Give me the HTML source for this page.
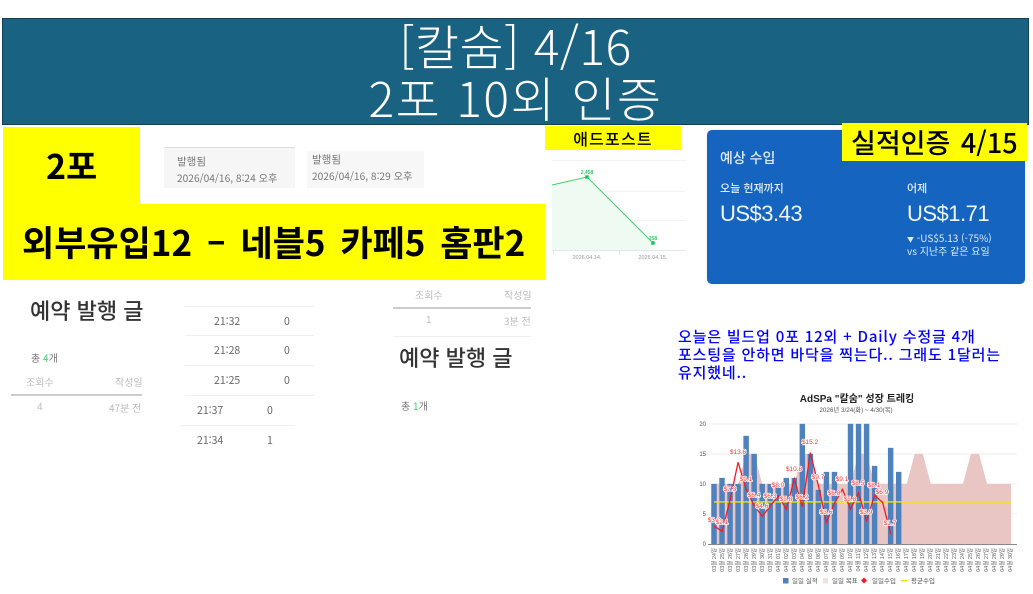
<!DOCTYPE html>
<html lang="ko"><head><meta charset="utf-8"><title>칼숨</title>
<style>
html,body{margin:0;padding:0;background:#fff;}
body{width:1033px;height:594px;overflow:hidden;position:relative;font-family:"Liberation Sans","Noto Sans CJK KR",sans-serif;}
#w{position:absolute;left:0;top:0;width:1033px;height:594px;filter:blur(.3px);}
.a{position:absolute;white-space:nowrap;line-height:20px;height:20px;}
.b{position:absolute;}
.k{font-family:"Noto Sans CJK KR","Liberation Sans",sans-serif;}
.g{color:#777;font-size:10px;}
.l{color:#bbb;font-size:10px;}
.n{color:#666;font-size:10.5px;font-family:"Noto Sans CJK KR",sans-serif;}
.h{color:#333;font-size:22px;font-weight:500;font-family:"Noto Sans CJK KR",sans-serif;}
.ln{position:absolute;height:1px;background:#f0f0f0;}
.t{color:#00f;font-size:15px;font-weight:500;letter-spacing:.82px;}
svg text{font-family:"Liberation Sans","Noto Sans CJK KR",sans-serif;}
</style></head>
<body><div id="w">
<div class="b" style="left:2px;top:18px;width:1025px;height:105px;background:#1a6282;border:1px solid #123f55;"></div>
<div class="a k" style="left:2px;width:1027px;top:19px;height:50px;line-height:50px;text-align:center;color:#fff;font-size:48px;font-weight:300;letter-spacing:.5px;">[칼숨] 4/16</div>
<div class="a k" style="left:2px;width:1027px;top:71px;height:50px;line-height:50px;text-align:center;color:#fff;font-size:48px;font-weight:300;letter-spacing:1.5px;">2포 10외 인증</div>

<div class="b" style="left:3px;top:127px;width:137px;height:78px;background:#ff0;"></div>
<div class="b" style="left:3px;top:204px;width:542px;height:76px;background:#ff0;"></div>
<div class="a k" style="left:46px;top:145px;height:40px;line-height:40px;font-size:34px;font-weight:700;color:#000;">2포</div>
<div class="a k" style="left:22px;top:221px;height:42px;line-height:42px;font-size:35px;font-weight:700;color:#000;word-spacing:5px;">외부유입12 – 네블5 카페5 홈판2</div>

<div class="b" style="left:164px;top:147px;width:131px;height:40px;background:#f6f6f6;border-top:1px solid #ddd;"></div>
<div class="b" style="left:307px;top:151px;width:117px;height:37px;background:#f7f7f7;"></div>
<div class="a k g" style="left:177px;top:152px;font-size:10.5px;">발행됨</div>
<div class="a k g" style="left:177px;top:168px;font-size:10.2px;">2026/04/16, 8:24 오후</div>
<div class="a k g" style="left:312px;top:150px;font-size:10.5px;">발행됨</div>
<div class="a k g" style="left:312px;top:166px;font-size:10.2px;">2026/04/16, 8:29 오후</div>

<div class="a h" style="left:30px;top:300px;">예약 발행 글</div>
<div class="a k g" style="left:31px;top:348px;">총 <span style="color:#3ecf6b">4</span>개</div>
<div class="a k l" style="left:26px;top:372px;">조회수</div>
<div class="a k l" style="left:115px;top:372px;">작성일</div>
<div class="ln" style="left:11px;top:394px;width:131px;height:1.5px;background:#ccc;"></div>
<div class="a l" style="left:37px;top:398px;">4</div>
<div class="a k l" style="left:109px;top:398px;">47분 전</div>

<div class="ln" style="left:185px;top:306px;width:129px;"></div>
<div class="a n" style="left:214px;top:312px;">21:32</div><div class="a n" style="left:284px;top:312px;">0</div>
<div class="ln" style="left:185px;top:335px;width:129px;"></div>
<div class="a n" style="left:214px;top:341px;">21:28</div><div class="a n" style="left:284px;top:341px;">0</div>
<div class="ln" style="left:185px;top:365px;width:129px;"></div>
<div class="a n" style="left:214px;top:371px;">21:25</div><div class="a n" style="left:284px;top:371px;">0</div>
<div class="ln" style="left:185px;top:395px;width:129px;"></div>
<div class="a n" style="left:197px;top:401px;">21:37</div><div class="a n" style="left:267px;top:401px;">0</div>
<div class="ln" style="left:180px;top:425px;width:115px;"></div>
<div class="a n" style="left:197px;top:431px;">21:34</div><div class="a n" style="left:267px;top:431px;">1</div>

<div class="a k l" style="left:415px;top:285px;">조회수</div>
<div class="a k l" style="left:504px;top:285px;">작성일</div>
<div class="ln" style="left:393px;top:307px;width:138px;height:1.5px;background:#ccc;"></div>
<div class="a l" style="left:426px;top:311px;">1</div>
<div class="a k l" style="left:504px;top:311px;">3분 전</div>
<div class="ln" style="left:393px;top:336px;width:138px;"></div>
<div class="a h" style="left:399px;top:347px;">예약 발행 글</div>
<div class="a k g" style="left:401px;top:396px;">총 <span style="color:#3ecf6b">1</span>개</div>

<div class="b" style="left:545px;top:126px;width:136px;height:24px;background:#ff0;"></div>
<div class="a k" style="left:545px;width:136px;top:128px;text-align:center;font-size:16px;font-weight:500;letter-spacing:1.2px;color:#000;">애드포스트</div>
<svg class="b" style="left:545px;top:150px;" width="145" height="115" viewBox="545 150 145 115">
<line x1="552" x2="686" y1="160.5" y2="160.5" stroke="#f2f2f2"/>
<line x1="552" x2="686" y1="191.5" y2="191.5" stroke="#f4f4f4"/>
<line x1="552" x2="686" y1="220.5" y2="220.5" stroke="#f4f4f4"/>
<polygon points="552,185 587,177 653,243 653,251 552,251" fill="#effaf2"/>
<polyline points="552,185 587,177 653,243" fill="none" stroke="#3fd06a" stroke-width="1"/>
<rect x="585.3" y="175.3" width="3.4" height="3.4" fill="#06c755"/>
<rect x="651.3" y="241.3" width="3.4" height="3.4" fill="#06c755"/>
<line x1="552" x2="686" y1="250.5" y2="250.5" stroke="#dfe8f4"/>
<line x1="553.5" x2="553.5" y1="251" y2="255" stroke="#dfe8f4"/>
<line x1="619.5" x2="619.5" y1="251" y2="255" stroke="#dfe8f4"/>
<text x="587" y="174" font-size="5" font-weight="700" fill="#35c766" text-anchor="middle">2,458</text>
<text x="653" y="240" font-size="5" font-weight="700" fill="#35c766" text-anchor="middle">258</text>
<text x="587" y="259" font-size="5.5" fill="#999" text-anchor="middle">2026.04.14.</text>
<text x="653" y="259" font-size="5.5" fill="#999" text-anchor="middle">2026.04.15.</text>
</svg>

<div class="b" style="left:707px;top:130px;width:318px;height:154px;background:#1565c0;border-radius:5px;box-shadow:0 0 1px #9db;"></div>
<div class="b" style="left:842px;top:123px;width:185px;height:38px;background:#ff0;"></div>
<div class="a k" style="left:851px;top:122px;height:40px;line-height:40px;font-size:27px;font-weight:500;color:#000;word-spacing:3px;">실적인증 4/15</div>
<div class="a k" style="left:720px;top:148px;font-size:14px;font-weight:500;color:#dde9f7;">예상 수입</div>
<div class="a k" style="left:720px;top:178px;font-size:11px;font-weight:500;color:#e3edf9;">오늘 현재까지</div>
<div class="a" style="left:720px;top:204px;font-size:22px;letter-spacing:-.5px;color:#f0f5fc;">US$3.43</div>
<div class="a k" style="left:907px;top:178px;font-size:11px;font-weight:500;color:#e3edf9;">어제</div>
<div class="a" style="left:907px;top:204px;font-size:22px;letter-spacing:-.5px;color:#f0f5fc;">US$1.71</div>
<div class="a k" style="left:907px;top:228px;font-size:10px;color:#dfeaf8;"><span style="font-size:7px;">▼</span> -US$5.13 (-75%)</div>
<div class="a k" style="left:907px;top:241px;font-size:10px;color:#dfeaf8;">vs 지난주 같은 요일</div>

<div class="a k t" style="left:678px;top:327px;">오늘은 빌드업 0포 12외 + Daily 수정글 4개</div>
<div class="a k t" style="left:678px;top:345px;">포스팅을 안하면 바닥을 찍는다.. 그래도 1달러는</div>
<div class="a k t" style="left:678px;top:363px;">유지했네..</div>

<svg class="b" style="left:680px;top:385px;" width="353" height="205" viewBox="680 385 353 205">
<text x="857" y="402" font-size="10" font-weight="700" fill="#222" text-anchor="middle">AdSPa "칼숨" 성장 트레킹</text>
<text x="856" y="412" font-size="6.3" fill="#555" text-anchor="middle">2026년 3/24(화) ~ 4/30(목)</text>
<g stroke="#eee" stroke-width="1">
<line x1="708" x2="1017" y1="424" y2="424"/><line x1="708" x2="1017" y1="454" y2="454"/><line x1="708" x2="1017" y1="484" y2="484"/><line x1="708" x2="1017" y1="514" y2="514"/>
</g>
<g font-size="6" fill="#555" text-anchor="end">
<text x="706" y="426">20</text><text x="706" y="456">15</text><text x="706" y="486">10</text><text x="706" y="516">5</text><text x="706" y="546">0</text>
</g>
<g transform="translate(714,544) scale(8.03,-6.01)">
<polygon fill="#e9c6c4" points="0,0 0,10 3,10 4,15 5,15 6,10 10,10 11,15 12,15 13,10 17,10 18,15 19,15 20,10 24,10 25,15 26,15 27,10 31,10 32,15 33,15 34,10 37,10 37,0"/>
<g fill="#4f81bd">
<rect x="-.34" width=".68" height="10"/><rect x=".66" width=".68" height="11"/><rect x="1.66" width=".68" height="10"/><rect x="2.66" width=".68" height="10"/><rect x="3.66" width=".68" height="18"/><rect x="4.66" width=".68" height="15"/><rect x="5.66" width=".68" height="10"/><rect x="6.66" width=".68" height="10"/><rect x="7.66" width=".68" height="9.5"/><rect x="8.66" width=".68" height="11"/><rect x="9.66" width=".68" height="11"/><rect x="10.66" width=".68" height="20"/><rect x="11.66" width=".68" height="15"/><rect x="12.66" width=".68" height="9"/><rect x="13.66" width=".68" height="12"/><rect x="14.66" width=".68" height="12"/><rect x="16.66" width=".68" height="20"/><rect x="17.66" width=".68" height="20"/><rect x="18.66" width=".68" height="20"/><rect x="19.66" width=".68" height="13"/><rect x="21.66" width=".68" height="16"/><rect x="22.66" width=".68" height="12"/>
</g>
<line x1="0" x2="37" y1="7" y2="7" stroke="#f2e500" stroke-width="1.3" vector-effect="non-scaling-stroke"/>
<polyline fill="none" stroke="#f01c22" stroke-width="1.3" vector-effect="non-scaling-stroke" points="0,3 1,2.1 2,7.3 3,13.6 4,9.1 5,6.4 6,4.6 7,6.3 8,8 9,5.8 10,10.8 11,6.2 12,15.2 13,9.7 14,3.6 15,6.8 16,9.1 17,5.8 18,8.5 19,3.9 20,8.1 21,6.9 22,1.7"/>
</g>
<line x1="708" x2="1017" y1="544.5" y2="544.5" stroke="#888"/>
<g font-size="6.5" fill="#f33" text-anchor="middle" stroke="#fff" stroke-width="1.5" paint-order="stroke">
<text x="714" y="522">$3.0</text><text x="722" y="524">$2.1</text><text x="730" y="491">$7.3</text><text x="738" y="454">$13.6</text><text x="746" y="481">$9.1</text><text x="754" y="497">$6.4</text><text x="762" y="508">$4.6</text><text x="770" y="498">$6.3</text><text x="778" y="487">$8.0</text><text x="786" y="501">$5.8</text><text x="794" y="471">$10.8</text><text x="802" y="499">$6.2</text><text x="810" y="444">$15.2</text><text x="818" y="479">$9.7</text><text x="826" y="514">$3.6</text><text x="834" y="495">$6.8</text><text x="842" y="481">$9.1</text><text x="850" y="501">$5.8</text><text x="858" y="485">$8.5</text><text x="866" y="514">$3.9</text><text x="874" y="487">$8.1</text><text x="882" y="494">$6.9</text><text x="890" y="525">$1.7</text>
</g>
<g font-size="5.5" fill="#666" text-anchor="end">
<text transform="translate(716,548) rotate(-90)">03월 24일</text><text transform="translate(724,548) rotate(-90)">03월 25일</text><text transform="translate(732,548) rotate(-90)">03월 26일</text><text transform="translate(740,548) rotate(-90)">03월 27일</text><text transform="translate(748,548) rotate(-90)">03월 28일</text><text transform="translate(756,548) rotate(-90)">03월 29일</text><text transform="translate(764,548) rotate(-90)">03월 30일</text><text transform="translate(772,548) rotate(-90)">03월 31일</text><text transform="translate(780,548) rotate(-90)">04월 01일</text><text transform="translate(788,548) rotate(-90)">04월 02일</text><text transform="translate(796,548) rotate(-90)">04월 03일</text><text transform="translate(804,548) rotate(-90)">04월 04일</text><text transform="translate(812,548) rotate(-90)">04월 05일</text><text transform="translate(820,548) rotate(-90)">04월 06일</text><text transform="translate(828,548) rotate(-90)">04월 07일</text><text transform="translate(836,548) rotate(-90)">04월 08일</text><text transform="translate(844,548) rotate(-90)">04월 09일</text><text transform="translate(852,548) rotate(-90)">04월 10일</text><text transform="translate(860,548) rotate(-90)">04월 11일</text><text transform="translate(868,548) rotate(-90)">04월 12일</text><text transform="translate(876,548) rotate(-90)">04월 13일</text><text transform="translate(884,548) rotate(-90)">04월 14일</text><text transform="translate(892,548) rotate(-90)">04월 15일</text><text transform="translate(900,548) rotate(-90)">04월 16일</text><text transform="translate(908,548) rotate(-90)">04월 17일</text><text transform="translate(916,548) rotate(-90)">04월 18일</text><text transform="translate(924,548) rotate(-90)">04월 19일</text><text transform="translate(932,548) rotate(-90)">04월 20일</text><text transform="translate(940,548) rotate(-90)">04월 21일</text><text transform="translate(948,548) rotate(-90)">04월 22일</text><text transform="translate(956,548) rotate(-90)">04월 23일</text><text transform="translate(964,548) rotate(-90)">04월 24일</text><text transform="translate(972,548) rotate(-90)">04월 25일</text><text transform="translate(980,548) rotate(-90)">04월 26일</text><text transform="translate(988,548) rotate(-90)">04월 27일</text><text transform="translate(996,548) rotate(-90)">04월 28일</text><text transform="translate(1004,548) rotate(-90)">04월 29일</text><text transform="translate(1012,548) rotate(-90)">04월 30일</text>
</g>
<g font-size="6.5" fill="#555">
<rect x="783" y="578" width="5.5" height="5.5" fill="#4f81bd"/><text x="792" y="583">일일 실적</text>
<rect x="823" y="578" width="5" height="5.5" fill="#f1e0de"/><text x="832" y="583">일일 목표</text>
<polygon points="864,577.5 867,580.5 864,583.5 861,580.5" fill="#f01c22"/><text x="872" y="583">일일수입</text>
<rect x="901" y="580" width="6" height="1.5" fill="#f2e500"/><text x="911" y="583">평균수입</text>
</g>
</svg>
</div></body></html>
